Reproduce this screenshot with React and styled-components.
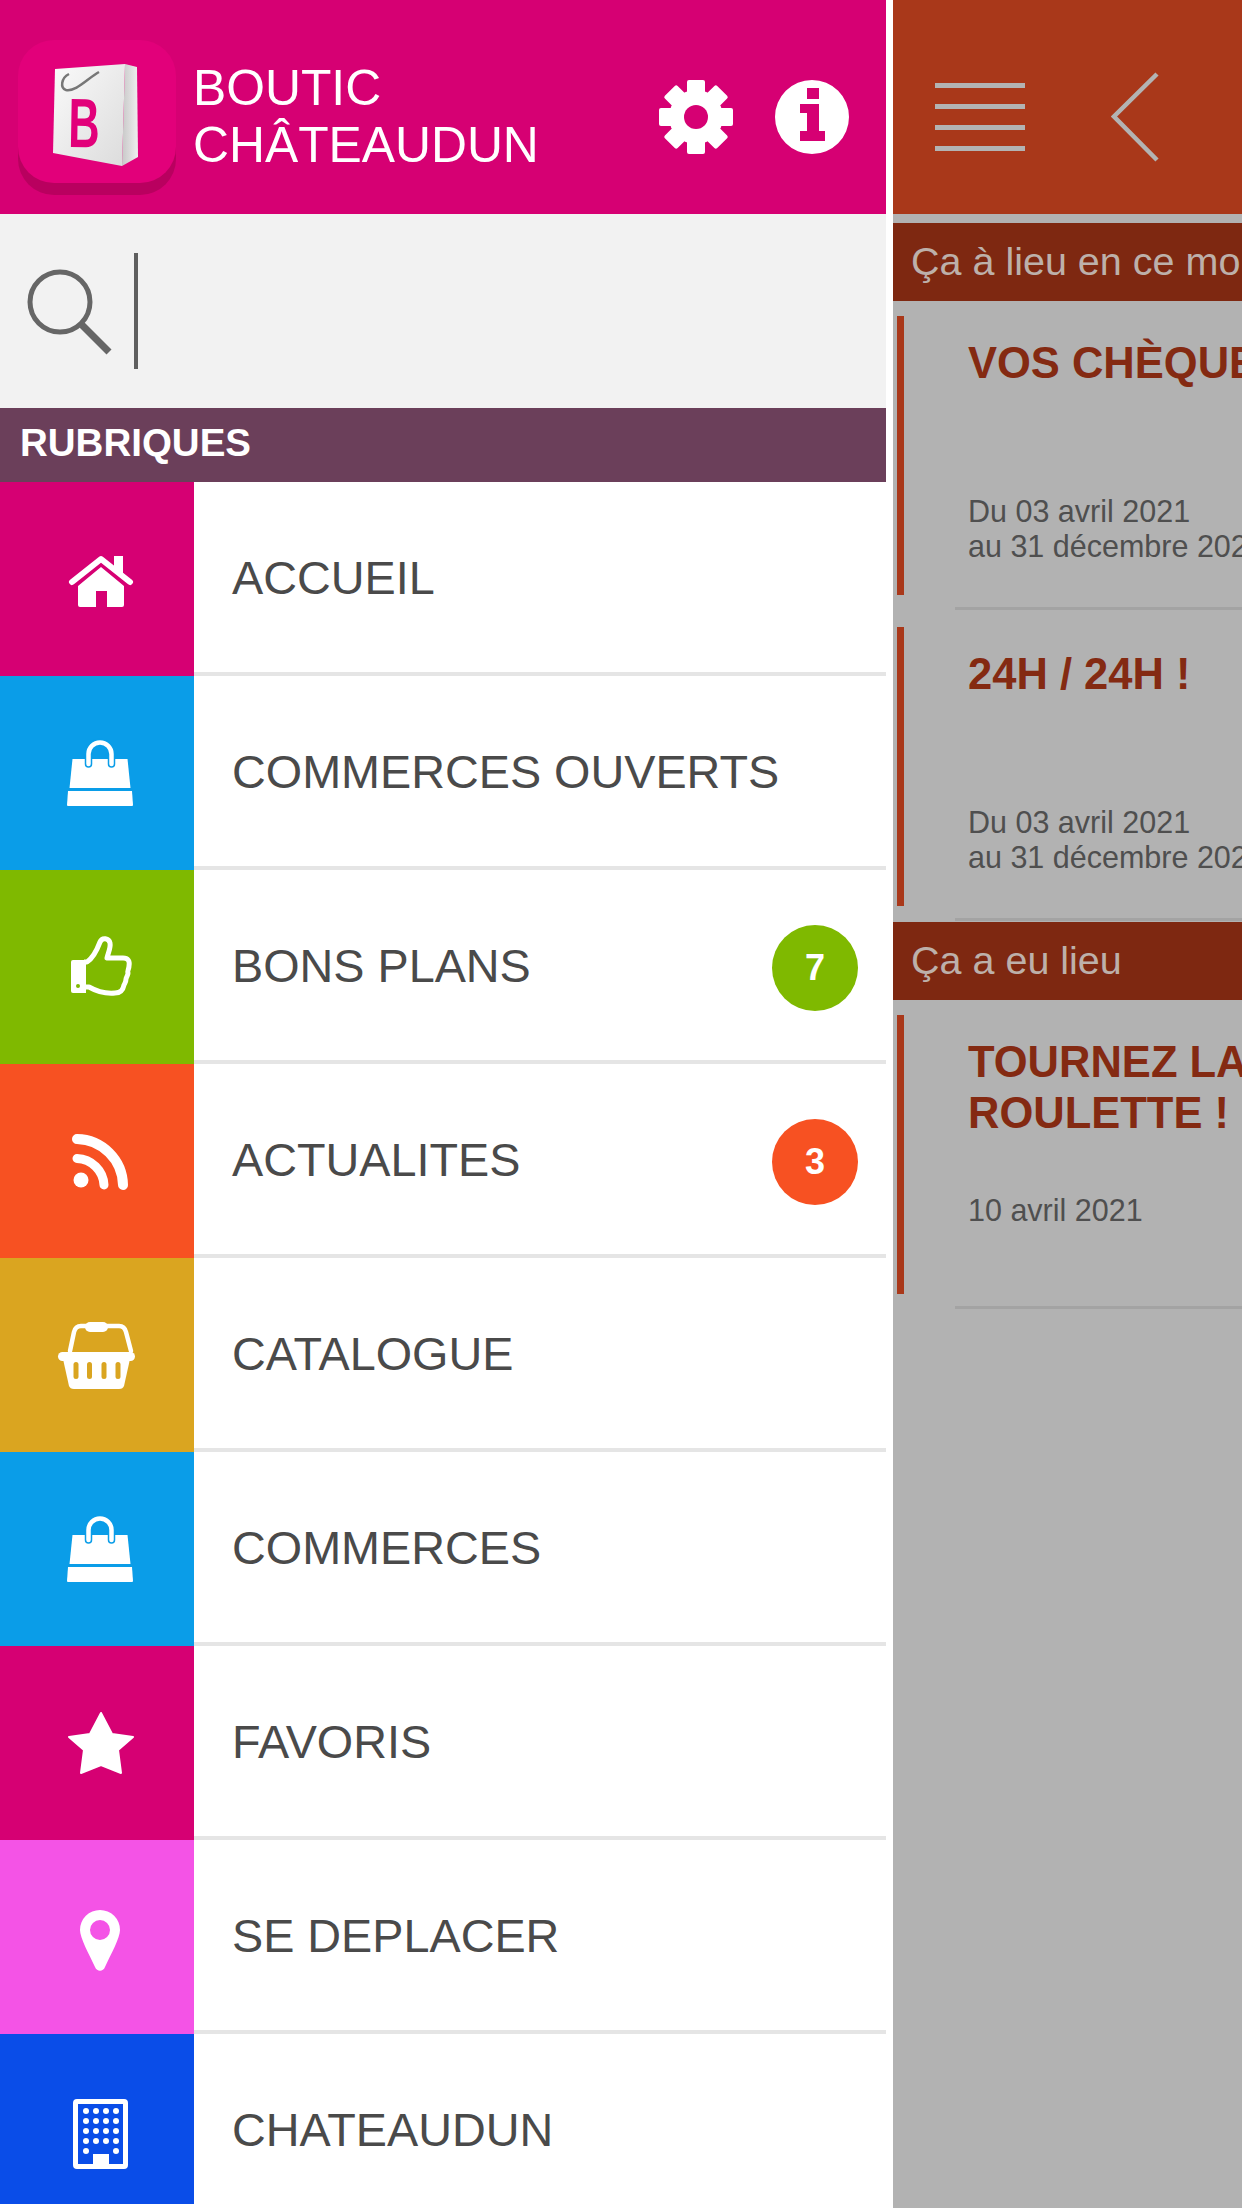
import React from "react"
import styled, { createGlobalStyle } from "styled-components"

const GlobalStyle = createGlobalStyle`
    html, body {
        margin: 0;
        padding: 0;
        background: #fff;
        font-family: "Liberation Sans", Arial, sans-serif;
    }
    * {
        box-sizing: border-box;
    }
`

const HEADER_PINK = "#d60073"

const GearIcon = () => (
    <svg viewBox="0 0 74 74" width="74" height="74" fill="#fff">
        {[0, 45, 90, 135, 180, 225, 270, 315].map(angle => (
            <rect key={angle} x="28" y="0" width="18" height="22" rx="2" transform={`rotate(${angle} 37 37)`} />
        ))}
        <circle cx="37" cy="37" r="27" />
        <circle cx="37" cy="37" r="12" fill={HEADER_PINK} />
    </svg>
)

const InfoIcon = () => (
    <svg viewBox="0 0 74 74" width="74" height="74" fill="#fff">
        <path
            fillRule="evenodd"
            d="M0 37a37 37 0 1 0 74 0a37 37 0 1 0-74 0zM32 8h12v11H32zM25 24h19v27h6v10H25V51h7V33h-7z"
        />
    </svg>
)

const HomeIcon = () => (
    <svg viewBox="0 0 100 100" width="100" height="100" fill="#fff">
        <path d="M64 27h9v18l-9-7z" />
        <path d="M22 53L51 30 80 53" fill="none" stroke="#fff" strokeWidth="6" strokeLinecap="round" strokeLinejoin="round" />
        <path d="M28 57L51 38 74 57v19a2 2 0 0 1-2 2H57V62H46v16H30a2 2 0 0 1-2-2z" />
    </svg>
)

const BagIcon = () => (
    <svg viewBox="0 0 100 100" width="100" height="100" fill="#fff">
        <g transform="translate(0 3)">
            <path d="M22.5 33h55l3 29h-61z" />
            <path d="M18 65h64l1 14a1 1 0 0 1-1 1H18a1 1 0 0 1-1-1z" />
            <path d="M38.5 38V28a11.5 11.5 0 0 1 23 0v10" fill="none" stroke="var(--cell)" strokeWidth="7.5" strokeLinecap="round" />
            <path d="M38.5 38V28a11.500 11.500 0 0 1 23 0v10" fill="none" stroke="#fff" strokeWidth="4.500" strokeLinecap="round" />
        </g>
    </svg>
)

const ThumbIcon = () => (
    <svg viewBox="0 0 100 100" width="100" height="100" fill="#fff">
        <g transform="translate(0 4)">
            <path d="M21 41a2 2 0 0 1 2-2h13v33H23a2 2 0 0 1-2-2z" />
            <circle cx="28" cy="65" r="2" fill="var(--cell)" />
            <path
                d="M34 41h3c6-4 10-12 13-20 2-5 9-4 10 1 1 5-2 10-3 15h16c5 0 7 3 6 8 0 3-2 5-1 7 0 3-2 4-2 6 0 3-1 4-2 6-1 5-3 8-9 8-11 1-19-2-26-6H34"
                fill="none"
                stroke="#fff"
                strokeWidth="5"
                strokeLinejoin="round"
            />
        </g>
    </svg>
)

const RssIcon = () => (
    <svg viewBox="0 0 100 100" width="100" height="100" fill="none" stroke="#fff">
        <circle cx="31" cy="69" r="7.500" fill="#fff" stroke="none" />
        <path d="M27 47.500A28 28 0 0 1 54 74" strokeWidth="9" strokeLinecap="round" />
        <path d="M27 28A47 47 0 0 1 73 74" strokeWidth="10" strokeLinecap="round" />
    </svg>
)

const BasketIcon = () => (
    <svg viewBox="0 0 100 100" width="100" height="100" fill="#fff">
        <g transform="translate(0 1)">
            <path d="M20 45l4-19c1-4 3-6 7-6h38c4 0 6 2 7 6l5 19" fill="none" stroke="#fff" strokeWidth="4.5" strokeLinecap="round" />
            <rect x="35" y="16" width="23" height="10" rx="5" />
            <rect x="8" y="46" width="77" height="9" rx="4.500" />
            <path d="M13 53h67l-6 27c-1 2-2 3-5 3H24c-3 0-4-1-5-3z" />
            <rect x="23.500" y="56" width="5" height="17" rx="2.500" fill="var(--cell)" />
            <rect x="37" y="56" width="5" height="17" rx="2.500" fill="var(--cell)" />
            <rect x="51.500" y="56" width="5" height="17" rx="2.500" fill="var(--cell)" />
            <rect x="65.500" y="56" width="5" height="17" rx="2.500" fill="var(--cell)" />
        </g>
    </svg>
)

const StarIcon = () => (
    <svg viewBox="0 0 100 100" width="100" height="100" fill="#fff" stroke="#fff" strokeWidth="2" strokeLinejoin="round">
        <path d="M51 20L62 41 83 44 68 57 71 80 51 72 31 80 34 57 19 44 40 41z" />
    </svg>
)

const PinIcon = () => (
    <svg viewBox="0 0 100 100" width="100" height="100" fill="#fff">
        <g transform="translate(0 1)">
            <path fillRule="evenodd" d="M30 42a20 20 0 0 1 40 0c0 8-9 24-15 37-2 5-8 5-10 0-6-13-15-29-15-37zm10 0a10 10 0 0 0 20 0 10 10 0 0 0-20 0z" />
        </g>
    </svg>
)

const BuildingIcon = () => {
    const rows = [30, 40, 50, 60]
    const cols = [36, 46, 56, 66]
    return (
        <svg viewBox="0 0 100 100" width="100" height="100" fill="#fff">
            <rect x="25.500" y="20.500" width="50" height="65" rx="1.500" fill="var(--cell)" stroke="#fff" strokeWidth="5" />
            {rows.map(y => cols.map(x => <circle key={x + "-" + y} cx={x} cy={y} r="3" />))}
            <circle cx="36" cy="70" r="3" />
            <circle cx="66" cy="70" r="3" />
            <rect x="43" y="73" width="16" height="11" />
        </svg>
    )
}

const menu = [
    { label: "ACCUEIL", color: "#d60073", icon: <HomeIcon /> },
    { label: "COMMERCES OUVERTS", color: "#0a9de8", icon: <BagIcon /> },
    { label: "BONS PLANS", color: "#7fb900", icon: <ThumbIcon />, badge: 7 },
    { label: "ACTUALITES", color: "#f75122", icon: <RssIcon />, badge: 3 },
    { label: "CATALOGUE", color: "#daa520", icon: <BasketIcon /> },
    { label: "COMMERCES", color: "#0a9de8", icon: <BagIcon /> },
    { label: "FAVORIS", color: "#d60073", icon: <StarIcon /> },
    { label: "SE DEPLACER", color: "#f453e6", icon: <PinIcon /> },
    { label: "CHATEAUDUN", color: "#0a4de8", icon: <BuildingIcon /> },
]

const sections = [
    {
        title: "Ça à lieu en ce moment",
        events: [
            { title: ["VOS CHÈQUES CADEAUX"], dates: ["Du 03 avril 2021", "au 31 décembre 2021"] },
            { title: ["24H / 24H !"], dates: ["Du 03 avril 2021", "au 31 décembre 2021"] },
        ],
    },
    {
        title: "Ça a eu lieu",
        events: [
            { title: ["TOURNEZ LA", "ROULETTE !"], dates: ["10 avril 2021"] },
        ],
    },
]

export default function App() {
    return (
        <Page>
            <GlobalStyle />
            <Drawer>
                <DrawerHeader>
                    <svg viewBox="18 40 158 155" width="158" height="155">
                        <defs>
                            <linearGradient id="bagFace" x1="0" y1="0" x2="1" y2="1">
                                <stop offset="0" stopColor="#fafafa" />
                                <stop offset="1" stopColor="#dcdcdc" />
                            </linearGradient>
                            <linearGradient id="bagSide" x1="0" y1="0" x2="1" y2="0">
                                <stop offset="0" stopColor="#c8c8c8" />
                                <stop offset="1" stopColor="#efefef" />
                            </linearGradient>
                        </defs>
                        <rect x="18" y="52" width="158" height="143" rx="36" fill="#b9005f" />
                        <rect x="18" y="40" width="158" height="143" rx="36" fill="#e2007a" />
                        <path d="M125 64l12 3 1 90-16 9z" fill="url(#bagSide)" />
                        <path d="M55 69l70-5-3 102-32-6-37-7z" fill="url(#bagFace)" />
                        <path d="M99 72C88 78 76 92 66 90 60 88 61 78 69 74" fill="none" stroke="#777" strokeWidth="2.500" />
                        <text
                            transform="translate(68 147) rotate(1) scale(.62 1)"
                            fontFamily="Liberation Sans, Arial, sans-serif"
                            fontWeight="700"
                            fontSize="70"
                            fill="#e2007a"
                        >
                            B
                        </text>
                    </svg>
                    <BrandName>BOUTIC<br />CHÂTEAUDUN</BrandName>
                    <HeaderActions>
                        <GearIcon />
                        <InfoIcon />
                    </HeaderActions>
                </DrawerHeader>

                <SearchBar>
                    <svg viewBox="0 0 90 90" width="90" height="90">
                        <circle cx="35" cy="36" r="30" fill="none" stroke="#666" strokeWidth="5" />
                        <path d="M57 59l27 27" stroke="#666" strokeWidth="7" />
                    </svg>
                    <Caret />
                </SearchBar>

                <MenuTitle>RUBRIQUES</MenuTitle>

                <Menu>
                    {menu.map(item => (
                        <MenuRow key={item.label}>
                            <IconCell $color={item.color}>{item.icon}</IconCell>
                            <RowBody>
                                <RowLabel>{item.label}</RowLabel>
                                {item.badge && <Badge $color={item.color}>{item.badge}</Badge>}
                            </RowBody>
                        </MenuRow>
                    ))}
                </Menu>
            </Drawer>

            <Main>
                <MainHeader>
                    <svg viewBox="0 0 90 69" width="90" height="69" fill="#b3b3b3">
                        <rect y="0" width="90" height="5" />
                        <rect y="21" width="90" height="5" />
                        <rect y="42" width="90" height="5" />
                        <rect y="63" width="90" height="5" />
                    </svg>
                    <svg viewBox="0 0 48 90" width="48" height="90">
                        <path d="M46 2L3 44.500 46 88" fill="none" stroke="#b3b3b3" strokeWidth="4.500" />
                    </svg>
                </MainHeader>

                {sections.map(section => (
                    <EventSection key={section.title}>
                        <SectionTitle>{section.title}</SectionTitle>
                        {section.events.map(event => (
                            <EventItem key={event.title[0]}>
                                <EventCard>
                                    <EventTitle>
                                        {event.title.map(line => <div key={line}>{line}</div>)}
                                    </EventTitle>
                                    <EventDates>
                                        {event.dates.map(line => <div key={line}>{line}</div>)}
                                    </EventDates>
                                </EventCard>
                                <EventRule />
                            </EventItem>
                        ))}
                    </EventSection>
                ))}
            </Main>
        </Page>
    )
}

const Page = styled.div`
    display: flex;
    gap: 7px;
    width: 1242px;
    height: 2208px;
    overflow: hidden;
`

const Drawer = styled.aside`
    display: flex;
    flex-direction: column;
    flex: 0 0 886px;
    height: 2204px;
    overflow: hidden;
`

const DrawerHeader = styled.header`
    display: flex;
    align-items: center;
    flex: 0 0 214px;
    padding: 20px 37px 0 18px;
    background: ${HEADER_PINK};
    color: #fff;
`

const BrandName = styled.h1`
    margin: 0 0 0 17px;
    font-size: 49.8px;
    font-weight: 400;
    line-height: 57px;
`

const HeaderActions = styled.div`
    display: flex;
    gap: 42px;
    margin-left: auto;
`

const SearchBar = styled.div`
    display: flex;
    align-items: center;
    gap: 19px;
    flex: 0 0 194px;
    padding-left: 25px;
    background: #f2f2f2;
`

const Caret = styled.span`
    width: 4px;
    height: 116px;
    background: #5f5f5f;
`

const MenuTitle = styled.h2`
    display: flex;
    align-items: center;
    flex: 0 0 74px;
    margin: 0;
    padding: 0 0 4px 20px;
    background: #6b3f5a;
    color: #fff;
    font-size: 38.5px;
    font-weight: 700;
`

const Menu = styled.nav`
    flex: 1;
    min-height: 0;
    overflow: hidden;
`

const MenuRow = styled.div`
    display: flex;
    height: 194px;
`

const IconCell = styled.div`
    --cell: ${props => props.$color};
    display: flex;
    align-items: center;
    justify-content: center;
    flex: 0 0 194px;
    padding-left: 6px;
    background: ${props => props.$color};
`

const RowBody = styled.div`
    display: flex;
    align-items: center;
    flex: 1;
    padding: 2px 28px 0 38px;
    border-bottom: 4px solid #e5e5e5;
`

const RowLabel = styled.span`
    color: #4a4a4a;
    font-size: 46.75px;
`

const Badge = styled.span`
    display: flex;
    align-items: center;
    justify-content: center;
    width: 86px;
    height: 86px;
    margin: 3px 0 0 auto;
    border-radius: 50%;
    background: ${props => props.$color};
    color: #fff;
    font-size: 36px;
    font-weight: 700;
`

const Main = styled.main`
    flex: 1;
    min-width: 0;
    overflow: hidden;
    background: #b2b2b2;
`

const MainHeader = styled.header`
    display: flex;
    align-items: center;
    gap: 86px;
    height: 214px;
    margin-bottom: 9px;
    padding: 20px 0 0 42px;
    background: #a9381a;
`

const EventSection = styled.section`
    & + & {
        margin-top: -1px;
    }
`

const SectionTitle = styled.h3`
    display: flex;
    align-items: center;
    height: 78px;
    margin: 0;
    padding: 0 0 2px 18px;
    background: #7e2811;
    color: #bdb0aa;
    font-size: 39.5px;
    font-weight: 400;
    white-space: nowrap;
`

const EventItem = styled.article`
    padding-top: 15px;
    margin-bottom: 2px;
`

const EventCard = styled.div`
    height: 279px;
    margin-left: 4px;
    padding: 22px 0 0 64px;
    border-left: 7px solid #a9381a;
    white-space: nowrap;
`

const EventTitle = styled.div`
    min-height: 102px;
    color: #842a12;
    font-size: 43.5px;
    font-weight: 700;
    line-height: 51px;
`

const EventDates = styled.div`
    margin-top: 54px;
    color: #4f4f4f;
    font-size: 30.5px;
    line-height: 35px;
`

const EventRule = styled.div`
    height: 3px;
    margin: 12px 0 0 62px;
    background: #a3a3a3;
`
